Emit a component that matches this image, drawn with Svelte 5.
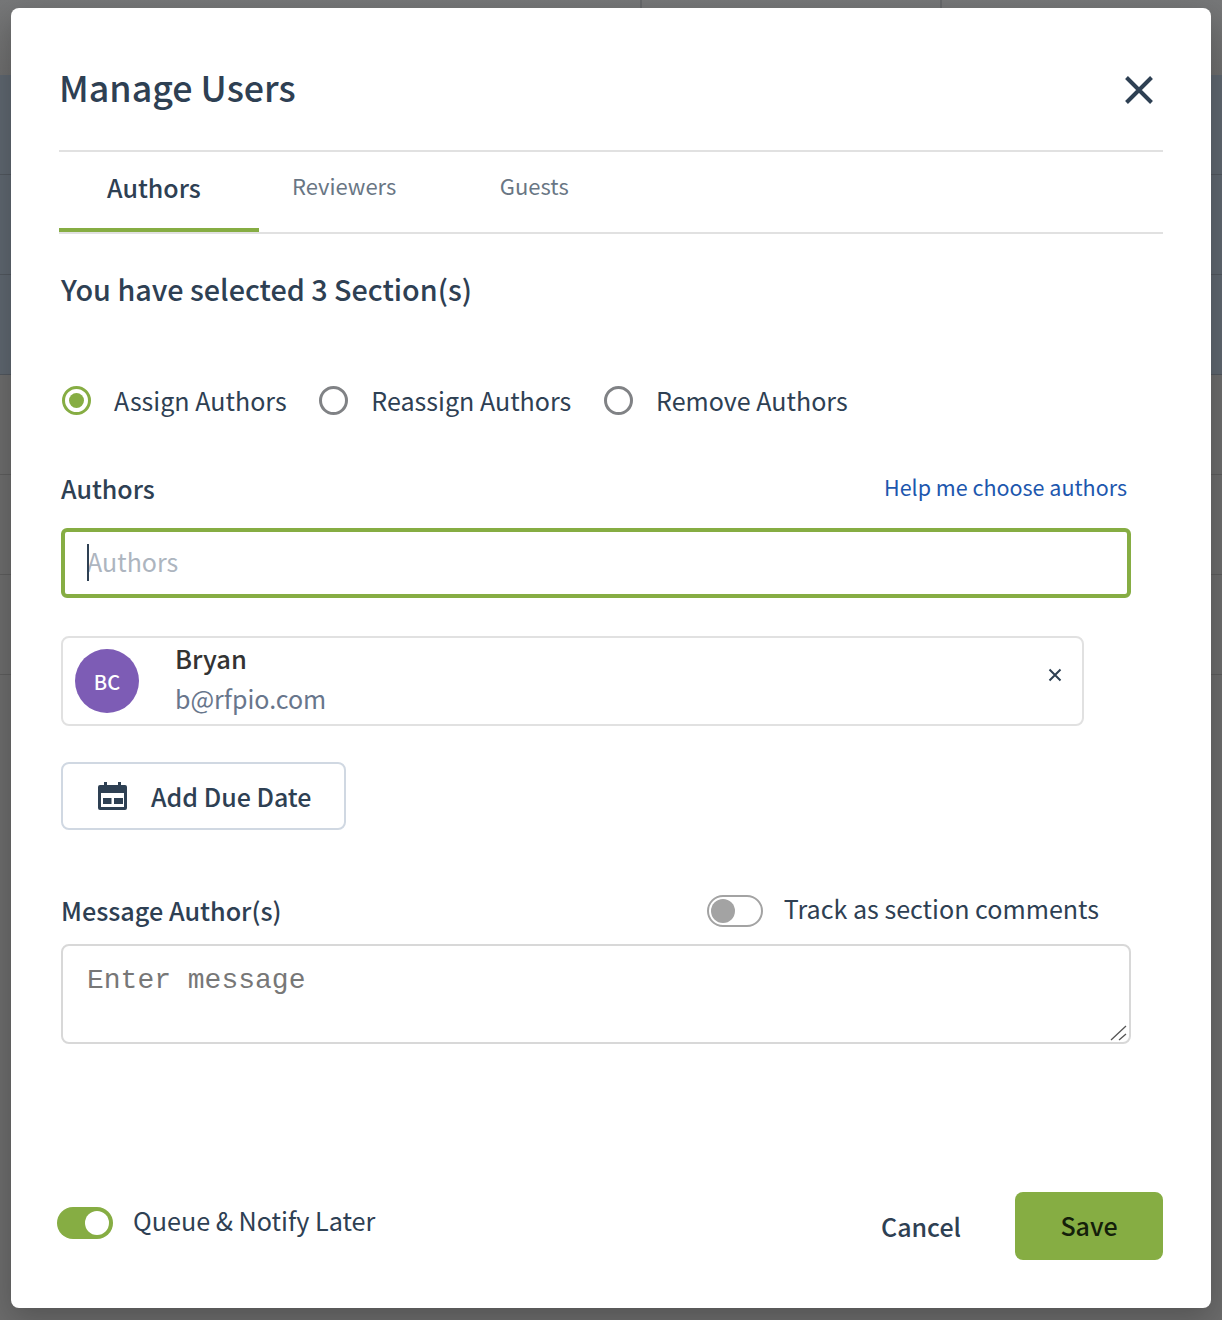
<script>
  const tabs = [
    { label: 'Authors', cls: 'tab active' },
    { label: 'Reviewers', cls: 'tab second' },
    { label: 'Guests', cls: 'tab third' }
  ];
  const radios = [
    { label: 'Assign Authors', on: true },
    { label: 'Reassign Authors', on: false },
    { label: 'Remove Authors', on: false }
  ];
</script>

<div class="page">
  <div class="backdrop" aria-hidden="true">
    <div class="band top"></div>
    <div class="band blue"></div>
    <div class="band blue"></div>
    <div class="band blue"></div>
    <div class="band gray"></div>
    <div class="band gray"></div>
    <div class="band gray"></div>
    <div class="band rest"></div>
  </div>

  <section class="modal">
    <header class="head">
      <h1>Manage Users</h1>
      <svg class="close" width="30" height="30" viewBox="0 0 30 30" aria-label="Close">
        <path d="M2.500 2.500 L27.500 27.500 M27.500 2.500 L2.500 27.500" stroke="#2e4053" stroke-width="4" fill="none" />
      </svg>
    </header>

    <nav class="tabs">
      {#each tabs as t}
        <span class={t.cls}>{t.label}</span>
      {/each}
    </nav>

    <h2>You have selected 3 Section(s)</h2>

    <div class="radios">
      {#each radios as r}
        <label class="radio">
          <span class="dot" class:on={r.on}></span>
          <span>{r.label}</span>
        </label>
      {/each}
    </div>

    <div class="label-row">
      <span class="label">Authors</span>
      <a class="help" href="#help">Help me choose authors</a>
    </div>

    <div class="input-wrap">
      <input class="authors" placeholder="Authors" />
      <span class="caret"></span>
    </div>

    <div class="user">
      <span class="avatar">BC</span>
      <div class="user-text">
        <span class="name">Bryan</span>
        <span class="mail">b@rfpio.com</span>
      </div>
      <svg class="remove" width="14" height="14" viewBox="0 0 14 14">
        <path d="M1.500 1.500 L12.500 12.500 M12.500 1.500 L1.500 12.500" stroke="#2e4053" stroke-width="2" fill="none" />
      </svg>
    </div>

    <button class="due">
      <svg width="29" height="28" viewBox="0 0 29 28">
        <path fill="#2e4053" fill-rule="evenodd" d="M6 0h3v3h11V0h3v3h4a2 2 0 0 1 2 2v21a2 2 0 0 1-2 2H2a2 2 0 0 1-2-2V5a2 2 0 0 1 2-2h4V0ZM3 11v14h23V11H3Z" />
        <path fill="#2e4053" d="M5 16h8.500v6H5zM16 16h9v6h-9z" />
      </svg>
      <span>Add Due Date</span>
    </button>

    <div class="msg-row">
      <span class="label msg-label">Message Author(s)</span>
      <div class="track">
        <span class="switch off"><i></i></span>
        <span class="track-text">Track as section comments</span>
      </div>
    </div>

    <div class="message-wrap">
      <textarea class="message" placeholder="Enter message"></textarea>
      <svg class="grip" width="18" height="16" viewBox="0 0 18 16" aria-hidden="true">
        <path d="M1 15 L16 1 M9 15 L16 9" stroke="#555" stroke-width="1.300" fill="none" />
      </svg>
    </div>

    <footer class="foot">
      <div class="queue">
        <span class="switch on"><i></i></span>
        <span>Queue &amp; Notify Later</span>
      </div>
      <div class="actions">
        <button class="cancel">Cancel</button>
        <button class="save">Save</button>
      </div>
    </footer>
  </section>
</div>

<style>
  :global(body) {
    margin: 0;
    background: #6b6b6b;
  }

  .page {
    position: relative;
    width: 1222px;
    height: 1320px;
    overflow: hidden;
    box-sizing: border-box;
    padding: 8px 11px 0;
    font-family: "Noto Sans CJK SC", "Noto Sans", sans-serif;
    color: #2e4053;
  }

  .backdrop {
    position: absolute;
    inset: 0;
    display: flex;
    flex-direction: column;
  }

  .band {
    height: 100px;
    flex: none;
    box-sizing: border-box;
    border-bottom: 1px solid #53585e;
  }

  .band.top {
    height: 75px;
    border-bottom: 0;
    background:
      linear-gradient(#66686a, #66686a) 640px 0 / 2px 100% no-repeat,
      linear-gradient(#66686a, #66686a) 940px 0 / 2px 100% no-repeat,
      linear-gradient(#767778, #6c6c6c);
  }

  .band.blue {
    background: #5d656e;
    border-bottom-color: #50565d;
  }

  .band.gray {
    background: #6b6b6b;
    border-bottom-color: #5c5c5c;
  }

  .band.rest {
    flex: 1;
    border-bottom: 0;
    background: #6b6b6b;
  }

  .modal {
    position: relative;
    box-sizing: border-box;
    width: 1200px;
    height: 1300px;
    background: #fff;
    border-radius: 8px;
    padding: 0 48px;
    display: flex;
    flex-direction: column;
    align-items: flex-start;
    box-shadow: 0 10px 30px rgba(0, 0, 0, 0.22);
  }

  .head {
    width: 1104px;
    height: 144px;
    flex: none;
    box-sizing: border-box;
    border-bottom: 2px solid #e1e1e1;
    display: flex;
    justify-content: space-between;
    align-items: flex-start;
  }

  h1 {
    margin: 53px 0 0 0;
    font-size: 35.800px;
    line-height: 50px;
    font-weight: 500;
  }

  .close {
    margin: 67px 9px 0 0;
  }

  .tabs {
    width: 1104px;
    height: 82px;
    flex: none;
    box-sizing: border-box;
    border-bottom: 2px solid #e1e1e1;
    display: flex;
    align-items: flex-start;
  }

  .tab {
    font-size: 22px;
    line-height: 34px;
    color: #697684;
  }

  .tab.active {
    box-sizing: border-box;
    width: 200px;
    height: 80px;
    padding: 18px 0 0 48px;
    border-bottom: 4px solid #86ad43;
    font-size: 25px;
    line-height: 34px;
    font-weight: 500;
    color: #2e4053;
  }

  .tab.second {
    margin: 16px 0 0 33px;
  }

  .tab.third {
    margin: 16px 0 0 103.500px;
  }

  h2 {
    margin: 23px 0 0 2px;
    font-size: 28.750px;
    line-height: 64px;
    font-weight: 500;
    height: 64px;
  }

  .radios {
    margin: 59px 0 0 3px;
    display: flex;
    gap: 32.700px;
    font-size: 25.050px;
    line-height: 40px;
  }

  .radio {
    display: flex;
    align-items: center;
    gap: 23px;
  }

  .dot {
    box-sizing: border-box;
    width: 29px;
    height: 29px;
    margin-top: 1px;
    border-radius: 50%;
    border: 3px solid #808285;
    display: grid;
    place-items: center;
  }

  .dot.on {
    border-color: #86ad43;
  }

  .dot.on::after {
    content: "";
    width: 15px;
    height: 15px;
    border-radius: 50%;
    background: #86ad43;
  }

  .label-row {
    margin: 48px 0 0 2px;
    width: 1066px;
    display: flex;
    justify-content: space-between;
    align-items: flex-start;
  }

  .label {
    font-size: 25px;
    line-height: 40px;
    font-weight: 500;
  }

  .help {
    margin-top: 2px;
    font-size: 21.500px;
    line-height: 34px;
    color: #1d57ae;
    text-decoration: none;
  }

  .input-wrap {
    position: relative;
    margin: 20px 0 0 2px;
    width: 1070px;
    height: 70px;
  }

  .authors {
    box-sizing: border-box;
    width: 100%;
    height: 100%;
    border: 4px solid #86ad43;
    border-radius: 6px;
    padding: 0 22px 4px;
    outline: 0;
    font: inherit;
    font-size: 25px;
    color: #2e4053;
  }

  .authors::placeholder {
    color: #adb5bf;
    opacity: 1;
  }

  .caret {
    position: absolute;
    left: 26px;
    top: 16px;
    width: 2px;
    height: 37px;
    background: #2e4053;
  }

  .user {
    margin: 38px 0 0 2px;
    box-sizing: border-box;
    width: 1023px;
    height: 90px;
    border: 2px solid #e1e1e1;
    border-radius: 8px;
    padding-left: 12px;
    display: flex;
    align-items: center;
    position: relative;
  }

  .avatar {
    width: 64px;
    height: 64px;
    flex: none;
    border-radius: 50%;
    background: #7d5cb5;
    color: #fff;
    display: grid;
    place-items: center;
    font-size: 20px;
    font-weight: 500;
  }

  .user-text {
    margin-left: 36px;
    display: flex;
    flex-direction: column;
    margin-top: -7px;
  }

  .name {
    font-size: 25.500px;
    line-height: 40px;
    font-weight: 500;
    color: #333;
  }

  .mail {
    font-size: 25px;
    line-height: 40px;
    color: #68768c;
  }

  .remove {
    margin-left: auto;
    margin-right: 20px;
    margin-top: -12px;
  }

  .due {
    margin: 36px 0 0 2px;
    box-sizing: border-box;
    width: 285px;
    height: 68px;
    background: #fff;
    border: 2px solid #d0d8e2;
    border-radius: 8px;
    padding: 0 0 0 35px;
    display: flex;
    align-items: center;
    gap: 24px;
    font: inherit;
    font-size: 25px;
    font-weight: 500;
    color: #2e4053;
  }

  .msg-row {
    margin: 61px 0 0 2px;
    width: 1038px;
    display: flex;
    justify-content: space-between;
    align-items: center;
    height: 40px;
  }

  .msg-label {
    font-size: 25.200px;
    margin-bottom: 2px;
  }

  .track {
    display: flex;
    align-items: center;
    gap: 21px;
    font-size: 25.080px;
    line-height: 40px;
  }

  .track-text {
    margin-bottom: 6px;
  }

  .switch {
    box-sizing: border-box;
    display: flex;
    align-items: center;
    width: 56px;
    height: 32px;
    border-radius: 16px;
    padding: 2px;
  }

  .switch i {
    width: 24px;
    height: 24px;
    border-radius: 50%;
    display: block;
  }

  .switch.off {
    border: 2px solid #a3a3a3;
    background: #fff;
  }

  .switch.off i {
    background: #a3a3a3;
  }

  .switch.on {
    background: #86ad43;
    justify-content: flex-end;
    padding: 4px;
    margin-top: 7px;
  }

  .switch.on i {
    background: #fff;
  }

  .message-wrap {
    position: relative;
    margin: 13px 0 0 2px;
    width: 1070px;
    height: 100px;
  }

  .message {
    display: block;
    box-sizing: border-box;
    width: 100%;
    height: 100%;
    border: 2px solid #d8d8d8;
    border-radius: 8px;
    padding: 17px 24px;
    outline: 0;
    resize: none;
    font-family: "Liberation Mono", monospace;
    font-size: 28px;
    line-height: 36px;
  }

  .message::placeholder {
    color: #777;
    opacity: 1;
  }

  .grip {
    position: absolute;
    right: 3px;
    bottom: 3px;
  }

  .foot {
    margin-top: auto;
    margin-bottom: 48px;
    width: 1104px;
    display: flex;
    justify-content: space-between;
    align-items: flex-start;
  }

  .queue {
    display: flex;
    align-items: flex-start;
    gap: 20px;
    font-size: 25.200px;
    line-height: 40px;
    margin: 8px 0 0 -2px;
  }

  .actions {
    display: flex;
    align-items: center;
    gap: 54px;
  }

  button {
    font-family: inherit;
  }

  .cancel {
    background: none;
    border: 0;
    padding: 0;
    font-size: 25px;
    font-weight: 500;
    color: #2e4053;
  }

  .save {
    box-sizing: border-box;
    width: 148px;
    height: 68px;
    border: 0;
    padding: 0 0 2px;
    border-radius: 8px;
    background: #86ad43;
    color: #14200a;
    font-size: 25px;
    font-weight: 500;
  }
</style>
